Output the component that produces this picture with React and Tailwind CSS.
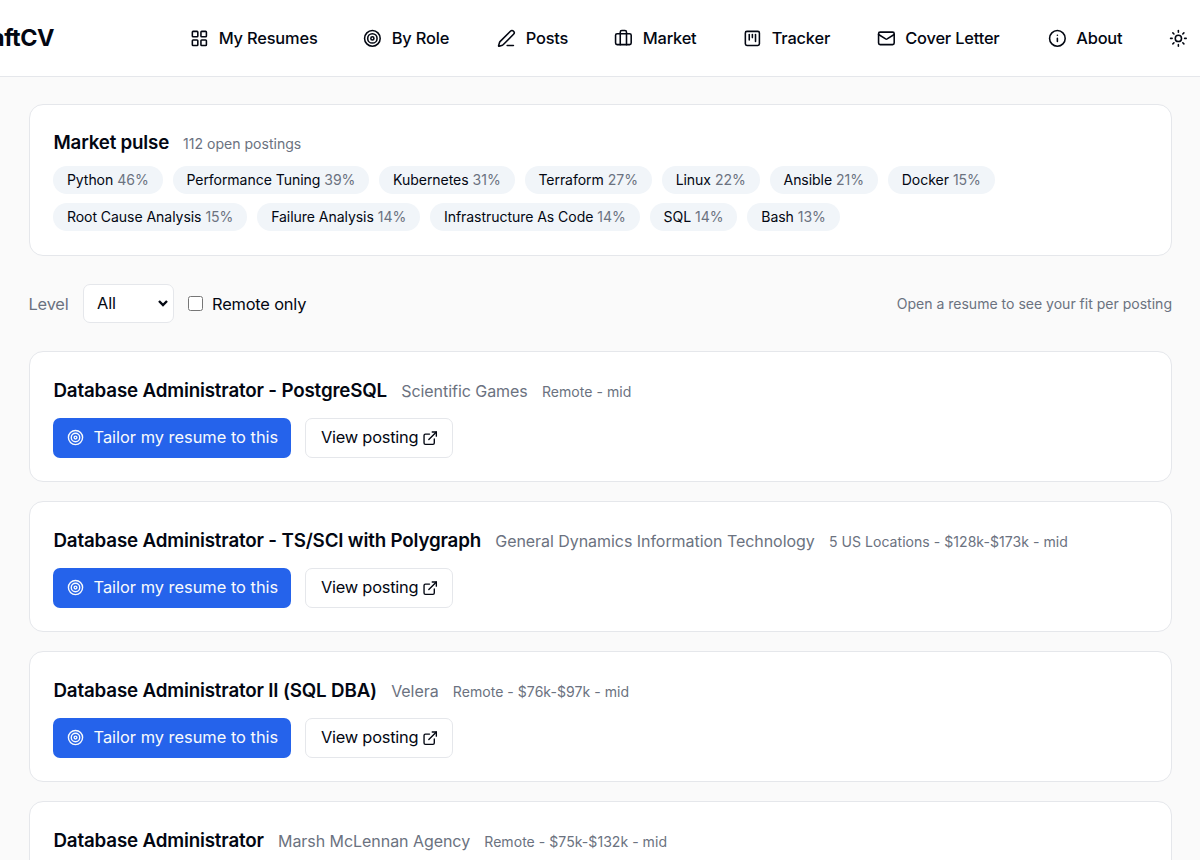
import React, { useState } from "react";
import {
  LayoutGrid,
  Target,
  PenLine,
  Briefcase,
  SquareKanban,
  Mail,
  Info,
  Sun,
  ExternalLink,
  ChevronDown,
} from "lucide-react";

const links = [
  { label: "My Resumes", icon: LayoutGrid, width: "w-[173px]" },
  { label: "By Role", icon: Target, width: "w-[134px]" },
  { label: "Posts", icon: PenLine, width: "w-[117px]" },
  { label: "Market", icon: Briefcase, width: "w-[129px]" },
  { label: "Tracker", icon: SquareKanban, width: "w-[133.5px]" },
  { label: "Cover Letter", icon: Mail, width: "w-[171px]" },
  { label: "About", icon: Info, width: "w-[121px]" },
];

const skillRows = [
  [
    ["Python", 46],
    ["Performance Tuning", 39],
    ["Kubernetes", 31],
    ["Terraform", 27],
    ["Linux", 22],
    ["Ansible", 21],
    ["Docker", 15],
  ],
  [
    ["Root Cause Analysis", 15],
    ["Failure Analysis", 14],
    ["Infrastructure As Code", 14],
    ["SQL", 14],
    ["Bash", 13],
  ],
];

const postings = [
  {
    title: "Database Administrator - PostgreSQL",
    company: "Scientific Games",
    meta: "Remote - mid",
  },
  {
    title: "Database Administrator - TS/SCI with Polygraph",
    company: "General Dynamics Information Technology",
    meta: "5 US Locations - $128k-$173k - mid",
  },
  {
    title: "Database Administrator II (SQL DBA)",
    company: "Velera",
    meta: "Remote - $76k-$97k - mid",
  },
  {
    title: "Database Administrator",
    company: "Marsh McLennan Agency",
    meta: "Remote - $75k-$132k - mid",
  },
];

const Header = () => {
  return (
    <header className="flex h-[77px] items-center border-b border-[#e5e7eb] bg-white">
      <div className="flex w-[190.4px] shrink-0">
        <div className="flex w-[54px] justify-end whitespace-nowrap text-[23.4px] font-bold tracking-[-0.02em]">
          CraftCV
        </div>
      </div>
      <nav className="flex shrink-0 items-center">
        {links.map(({ label, icon: Icon, width }) => (
          <a
            key={label}
            className={`flex shrink-0 items-center gap-[9.6px] whitespace-nowrap text-[16.4px] font-medium tracking-[-0.18px] ${width}`}
          >
            <Icon className="size-[18.75px] shrink-0" />
            {label}
          </a>
        ))}
      </nav>
      <Sun className="size-[18.75px] shrink-0" />
    </header>
  );
};

const Posting = ({ posting }) => {
  return (
    <article className="h-[131px] shrink-0 rounded-[14px] border border-[#e5e7eb] bg-white px-[23.5px] pt-[25px]">
      <div className="flex h-[28px] items-baseline gap-[14.2px] pl-[0.5px] whitespace-nowrap">
        <h2 className="text-[18.75px] leading-[28px] font-semibold tracking-[-0.17px]">
          {posting.title}
        </h2>
        <span className="text-[16px] tracking-[-0.05px] text-[#6b7280]">
          {posting.company}
        </span>
        <span className="text-[14.06px] tracking-[0.03px] text-[#6b7280]">
          {posting.meta}
        </span>
      </div>
      <div className="mt-[13px] flex gap-[14px]">
        <button className="flex h-[39.5px] w-[238px] items-center gap-[9.5px] rounded-[7px] bg-[#2563eb] pl-[14px] text-[16.4px] whitespace-nowrap text-[#f8fafc]">
          <Target className="size-[17px] shrink-0" />
          Tailor my resume to this
        </button>
        <button className="flex h-[39.5px] w-[148px] items-center gap-[3.5px] rounded-[7px] border border-[#e5e7eb] bg-white pl-[15px] text-[16.4px] tracking-[-0.24px] whitespace-nowrap">
          View posting
          <ExternalLink className="size-[16.4px] shrink-0" />
        </button>
      </div>
    </article>
  );
};

export default function App() {
  const [remote, setRemote] = useState(false);

  return (
    <div className="h-[860px] w-[1200px] overflow-hidden bg-[#fafafa] font-['Inter',sans-serif] text-[#030712]">
      <Header />
      <main className="mr-[28px] ml-[28.5px] flex flex-col pt-[27px]">
        <section className="h-[152px] rounded-[14px] border border-[#e5e7eb] bg-white px-[23.5px] pt-[24px]">
          <div className="flex h-[28px] items-baseline gap-[14px] pl-[0.5px]">
            <h2 className="text-[18.75px] leading-[28px] font-semibold tracking-[-0.2px]">
              Market pulse
            </h2>
            <span className="text-[14.06px] text-[#6b7280]">
              112 open postings
            </span>
          </div>
          <div className="mt-[9px] flex flex-col gap-[9px]">
            {skillRows.map((row, i) => (
              <div key={i} className="flex gap-[10px]">
                {row.map(([name, share]) => (
                  <span
                    key={name}
                    className="flex h-[28px] items-center gap-1 rounded-full bg-[#f1f5f9] px-[13.9px] text-[14.06px] tracking-[-0.06px] whitespace-nowrap"
                  >
                    {name}
                    <span className="text-[#6b7280]">{share}%</span>
                  </span>
                ))}
              </div>
            ))}
          </div>
        </section>

        <div className="mt-[28px] flex h-[39px] items-center text-[16.4px] tracking-[-0.18px]">
          <label className="w-[54px] pt-px text-[#6b7280]">Level</label>
          <div className="relative">
            <select className="h-[39px] w-[91px] appearance-none rounded-[7px] border border-[#e5e7eb] bg-white pl-[13.5px]">
              <option>All</option>
              <option>Junior</option>
              <option>Mid</option>
              <option>Senior</option>
            </select>
            <ChevronDown
              className="pointer-events-none absolute top-[11px] right-[2.5px] size-[16px]"
              strokeWidth={3.6}
              strokeLinecap="butt"
              strokeLinejoin="miter"
            />
          </div>
          <label className="ml-[14.5px] flex items-center gap-[9px]">
            <input
              type="checkbox"
              className="size-[15px]"
              checked={remote}
              onChange={(e) => setRemote(e.target.checked)}
            />
            <span className="pt-px">Remote only</span>
          </label>
          <span className="ml-auto text-[14.06px] tracking-[-0.01px] text-[#6b7280]">
            Open a resume to see your fit per posting
          </span>
        </div>

        <div className="mt-[28px] flex flex-col gap-[19px]">
          {postings.map((posting) => (
            <Posting key={posting.title} posting={posting} />
          ))}
        </div>
      </main>
    </div>
  );
}
